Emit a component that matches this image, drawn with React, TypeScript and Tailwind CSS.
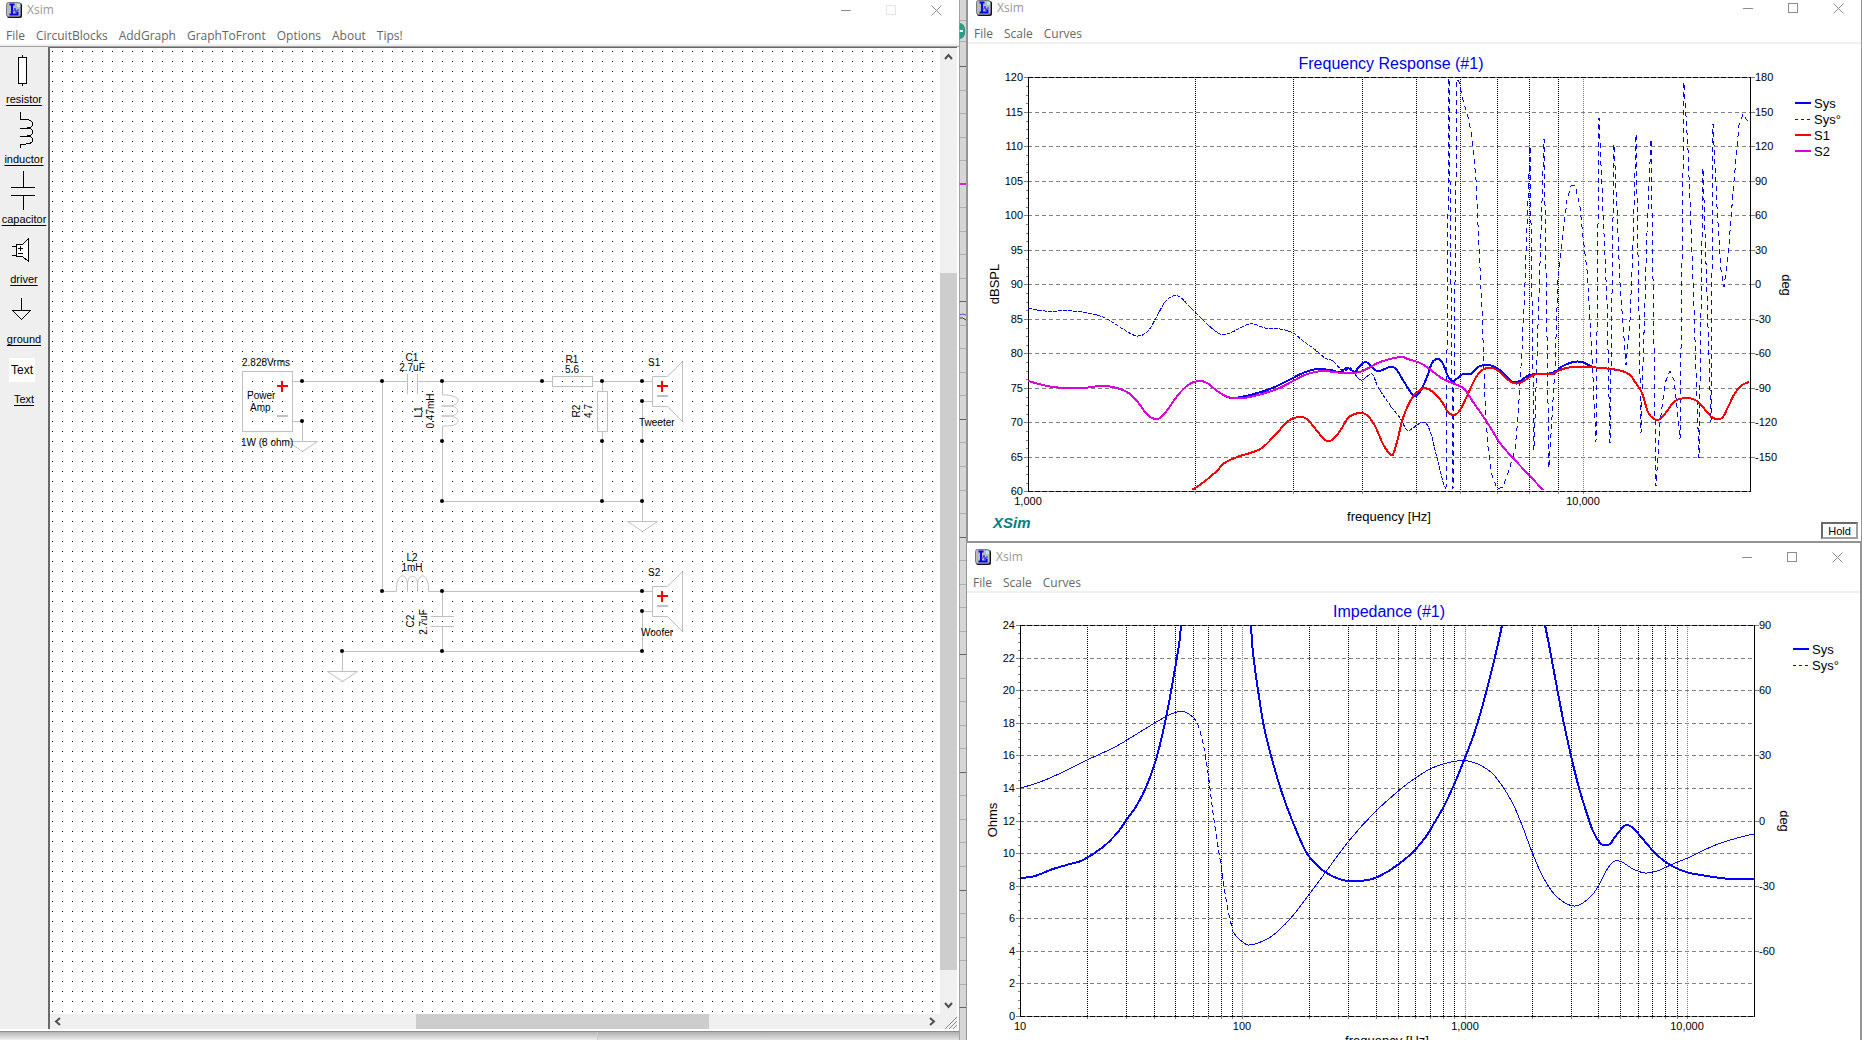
import React from "react";

type Pt = [number, number];

const pts = (s: string): Pt[] =>
  s
    .trim()
    .split(/\s+/)
    .map((p) => p.split(",").map(Number) as Pt);

/* Straight segments through every point. */
const polyline = (s: string) => "M" + pts(s).map((p) => p.join(" ")).join("L");

/* Catmull-Rom spline through every point. */
const spline = (s: string) => {
  const p = pts(s);
  let d = `M${p[0][0]} ${p[0][1]}`;
  for (let i = 0; i < p.length - 1; i++) {
    const a = p[i - 1] ?? p[i];
    const b = p[i];
    const c = p[i + 1];
    const e = p[i + 2] ?? c;
    d += `C${b[0] + (c[0] - a[0]) / 6} ${b[1] + (c[1] - a[1]) / 6} ${c[0] - (e[0] - b[0]) / 6} ${c[1] - (e[1] - b[1]) / 6} ${c[0]} ${c[1]}`;
  }
  return d;
};

/* ---------- window chrome ---------- */

function AppIcon() {
  return (
    <svg width="16" height="16" viewBox="0 0 16 16" aria-hidden="true">
      <rect x="1" y="1" width="15" height="15" rx="2" fill="#111" />
      <rect x="0.5" y="0.5" width="14" height="14" rx="2" fill="#b9b9bd" stroke="#77777c" />
      <path d="M3.5 2.5h5M6 2.5v10M3.5 12.5h8v-3" fill="none" stroke="#0000f0" strokeWidth="2" />
      <path d="M6 9h2l1-3 1 5 1-3h2" fill="none" stroke="#3c3cf0" />
      <rect x="11" y="2" width="3" height="3" fill="#a6f2ee" />
    </svg>
  );
}

function WindowButtons({ fixedSize = false }: { fixedSize?: boolean }) {
  const cls = "flex h-4 w-[45px] items-center justify-center";
  return (
    <div className="ml-auto flex text-[#8c8c8c]">
      <button type="button" aria-label="Minimize" className={cls}>
        <svg width="11" height="11"><path d="M0 5.5h10" stroke="currentColor" /></svg>
      </button>
      <button type="button" aria-label="Maximize" disabled={fixedSize} className={cls}>
        <svg width="11" height="11">
          <rect x="0.5" y="0.5" width="9" height="9" fill="none" stroke={fixedSize ? "#e4e4e4" : "currentColor"} />
        </svg>
      </button>
      <button type="button" aria-label="Close" className={cls}>
        <svg width="11" height="11"><path d="M0.5 0.5l10 10M10.5 0.5l-10 10" stroke="currentColor" /></svg>
      </button>
    </div>
  );
}

function Menu({ items }: { items: string[] }) {
  return (
    <nav className="box-content flex h-4 shrink-0 items-center gap-[11px] border-b-2 border-[#f0f0f0] pt-1 pl-[6px] text-[12px] leading-4 text-[#666]">
      {items.map((i) => (
        <button type="button" key={i}>
          {i}
        </button>
      ))}
    </nav>
  );
}

/* ---------- parts toolbar ---------- */

const tools: { name: string; icon: React.ReactNode }[] = [
  {
    name: "resistor",
    icon: (
      <>
        <rect x="18.5" y="9.5" width="8" height="26" fill="#fff" />
        <path d="M22.5 7v2M22.5 36v2" />
      </>
    ),
  },
  {
    name: "inductor",
    icon: (
      <path d="M20.5 4v7h3c12 1 12 9 3 9h-7h7c8 0 8 8 0 8h-7h7c9 0 8 8-1 8h-5v4" />
    ),
  },
  { name: "capacitor", icon: <path d="M23.5 3v16M11 19.5h24M11 27.5h24M23.5 28v14" /> },
  {
    name: "driver",
    icon: (
      <>
        <path d="M16.5 16.5h6l6-6v23l-6-5h-6z" fill="#fff" />
        <path d="M12 18.5h4M12 27.5h4M18 20.5h5M20.5 18v5M18 25.5h5" />
      </>
    ),
  },
  { name: "ground", icon: <path d="M21.5 10v12M12.5 22.5h18l-9 9z" /> },
  { name: "Text", icon: null },
];

function Toolbar() {
  return (
    <div className="flex w-12 shrink-0 flex-col bg-[#efefef] pt-px">
      {tools.map((t) => (
        <button type="button" key={t.name} className="flex h-[60px] flex-col items-center text-[11px] leading-4">
          {t.icon ? (
            <svg width="48" height="43" fill="none" stroke="#000" shapeRendering="crispEdges" aria-hidden="true">
              {t.icon}
            </svg>
          ) : (
            <span className="mt-[10px] mr-1 mb-[9px] flex h-6 w-[26px] items-center justify-center bg-white text-[12px]">
              Text
            </span>
          )}
          <span className="underline underline-offset-2">{t.name}</span>
        </button>
      ))}
    </div>
  );
}

/* ---------- schematic ---------- */

const nodes: Pt[] = [
  [302, 381], [382, 381], [442, 381], [542, 381], [602, 381], [642, 381], [642, 401], [302, 421],
  [442, 441], [602, 441], [642, 441], [442, 501], [602, 501], [642, 501],
  [382, 591], [442, 591], [642, 591], [642, 611], [342, 651], [442, 651], [642, 651],
];

const Ground = ({ x, y }: { x: number; y: number }) => <path d={`M${x - 15} ${y}h30l-15 10z`} />;

const Terminals = ({ x, y, gap }: { x: number; y: number; gap: number }) => (
  <>
    <path d={`M${x - 5} ${y}h11M${x} ${y - 5}v11`} stroke="#f00" strokeWidth="2" />
    <path d={`M${x - 5} ${y + gap}h11`} strokeWidth="2" />
  </>
);

const Driver = ({ y }: { y: number }) => (
  <>
    <path d={`M642 ${y}.5h10M642 ${y + 20}.5h10`} />
    <path d={`M667.5 ${y - 5}.5h-15v30h15l15 15v-60z`} />
    <Terminals x={662} y={y + 5} gap={10} />
  </>
);

function Schematic() {
  return (
    <svg className="block h-full w-full" role="img" aria-label="Crossover schematic">
      <defs>
        <pattern id="grid" x="2" y="3" width="10" height="10" patternUnits="userSpaceOnUse">
          <rect width="1" height="1" fill="#000" />
        </pattern>
      </defs>
      <rect width="100%" height="100%" fill="#fff" />
      <rect width="100%" height="100%" fill="url(#grid)" />
      <g transform="translate(-50 -48)">
        <g fill="none" stroke="#c0c0c0">
          <rect x="242.5" y="371.5" width="50" height="60" />
          <Terminals x={282} y={386} gap={30} />
          <path d="M293 381.5h114M293 421.5h9.5v20M382.5 381v210M407.5 374v20M417.5 374v20M418 381.5h134M593 381.5h49" />
          <Ground x={302.5} y={441.5} />
          <rect x="552.5" y="376.5" width="40" height="10" />
          <rect x="597.5" y="391.5" width="10" height="40" />
          <path d="M602.5 381v10M602.5 432v69" />
          <path d="M442.5 381v14h4c15 1 15 10 3 11h-8h8c11 0 11 10 0 10h-8h8c12 1 12 10-3 10h-4v75" />
          <path d="M442 501.5h200.5M642.5 401v120" />
          <Ground x={642.5} y={521.5} />
          <path d="M382 591.5h14.5v-4c1-15 10-15 11-3v7v-7c0-11 10-11 10 0v7v-7c1-12 10-12 11 3v4h213.5" />
          <path d="M442.5 591v25M431 616.5h23M431 626.5h23M442.5 627v24M342.5 671v-19.5h300v-40" />
          <Ground x={342.5} y={671.5} />
          <Driver y={381} />
          <Driver y={591} />
        </g>
        {nodes.map(([x, y]) => (
          <circle key={`${x}-${y}`} cx={x} cy={y} r="2" />
        ))}
        <g fontSize="10">
          <text x="242" y="366">2.828Vrms</text>
          <text x="247" y="399">Power</text>
          <text x="250" y="411">Amp</text>
          <text x="241" y="446">1W (8 ohm)</text>
          <text x="648" y="366">S1</text>
          <text x="639" y="426">Tweeter</text>
          <text x="648" y="576">S2</text>
          <text x="641" y="636">Woofer</text>
          <g textAnchor="middle">
            <text x="412" y="361">C1</text>
            <text x="412" y="371">2.7uF</text>
            <text x="572" y="363">R1</text>
            <text x="572" y="373">5.6</text>
            <text x="412" y="561">L2</text>
            <text x="412" y="571">1mH</text>
            <text transform="translate(422 412) rotate(-90)">L1</text>
            <text transform="translate(434 411) rotate(-90)">0.47mH</text>
            <text transform="translate(580 411) rotate(-90)">R2</text>
            <text transform="translate(592 411) rotate(-90)">4.7</text>
            <text transform="translate(414 621) rotate(-90)">C2</text>
            <text transform="translate(427 622) rotate(-90)">2.7uF</text>
          </g>
        </g>
      </g>
    </svg>
  );
}

/* ---------- graphs ---------- */

type Label = { at: number; text: string };

type PlotProps = {
  name: string;
  view: string;
  box: [number, number, number, number];
  title: string;
  yTitle: string;
  grid: number[];
  left: Label[];
  right: Label[];
  minor: number[];
  decades: number[];
  bottom: Label[];
  titleAt: Pt;
  yTitleAt: Pt;
  degAt: Pt;
  freqAt: Pt;
  legendAt: Pt;
  legend: { name: string; color: string; dashed?: boolean }[];
  children: React.ReactNode;
};

function Plot(p: PlotProps) {
  const [l, t, r, b] = p.box;
  return (
    <svg className="block h-full w-full" viewBox={p.view} role="img" aria-label={p.name}>
      <g fill="none" stroke="#808080">
        {p.grid.map((y) => (
          <path key={y} d={`M${l} ${y}.5H${r}`} strokeDasharray="4 3" />
        ))}
        {p.left.map((v) => (
          <path key={v.at} d={`M${l - 4} ${v.at}.5h4`} />
        ))}
        {p.right.map((v) => (
          <path key={v.at} d={`M${r + 1} ${v.at}.5h4`} />
        ))}
        {p.left.slice(1).flatMap((v, i) => {
          const a = p.left[i].at;
          return [1, 2, 3].map((k) => (
            <path key={`${a}-${k}`} d={`M${l - 2} ${Math.round(a + ((v.at - a) * k) / 4)}.5h2`} />
          ));
        })}
        {[...p.minor, ...p.decades].map((x) => (
          <path key={x} d={`M${x}.5 ${b + 1}v2`} />
        ))}
        {p.decades.map((x) => (
          <path key={x} d={`M${x}.5 ${t}V${b}`} strokeDasharray="1 1" />
        ))}
        <path d={`M${l} ${t}.5H${r}M${l} ${b}.5H${r}`} />
      </g>
      <g fill="none" stroke="#000">
        {p.minor.map((x) => (
          <path key={x} d={`M${x}.5 ${t}V${b}`} strokeDasharray="1 1" />
        ))}
        <path d={`M${l} ${t}.5H${r}M${l} ${b}.5H${r}`} strokeDasharray="5 2" />
        <path d={`M${l}.5 ${t}V${b}M${r}.5 ${t}V${b + 1}`} />
      </g>
      <g fill="none" strokeLinejoin="round" shapeRendering="crispEdges">
        {p.children}
      </g>
      <g fontSize="11">
        {p.left.map((v) => (
          <text key={v.at} x={l - 5} y={v.at + 4} textAnchor="end">{v.text}</text>
        ))}
        {p.right.map((v) => (
          <text key={v.at} x={r + 5} y={v.at + 4}>{v.text}</text>
        ))}
        {p.bottom.map((v) => (
          <text key={v.at} x={v.at} y={b + 14} textAnchor="middle">{v.text}</text>
        ))}
      </g>
      <g fontSize="13">
        <g textAnchor="middle">
          <text x={p.titleAt[0]} y={p.titleAt[1]} fontSize="16" fill="#0000e6">{p.title}</text>
          <text x={p.freqAt[0]} y={p.freqAt[1]}>frequency [Hz]</text>
          <text transform={`translate(${p.yTitleAt.join(" ")}) rotate(-90)`}>{p.yTitle}</text>
          <text transform={`translate(${p.degAt.join(" ")}) rotate(90)`}>deg</text>
        </g>
        {p.legend.map((s, i) => {
          const x = p.legendAt[0];
          const y = p.legendAt[1] + i * 16;
          return (
            <g key={s.name}>
              <path
                d={s.dashed ? `M${x} ${y}.5h15` : `M${x} ${y}h16`}
                stroke={s.color}
                strokeWidth={s.dashed ? 1 : 2}
                strokeDasharray={s.dashed ? "3 3" : undefined}
              />
              <text x={x + 19} y={y + 5}>{s.name}</text>
            </g>
          );
        })}
      </g>
    </svg>
  );
}

const steps = (from: number, to: number, labels: string[]): Label[] =>
  labels.map((text, i) => ({ text, at: Math.round(from + ((to - from) * i) / (labels.length - 1)) }));

const BLUE = "#0000ff";
const RED = "#ff0000";
const MAGENTA = "#dc00dc";

const responseTail =
  "1603,368 1622,371 1630,375 1635,382 1642,393 1648,412 1654,419 1660,419 1667,411 1675,401 1687,398 1697,401 1707,412 1713,418 1722,418 1728,407 1735,393 1742,385 1749,382";
const wooferLow =
  "1028,381 1047,386 1063,388 1083,388 1100,386 1113,387 1127,392 1137,401 1145,412 1152,418 1160,418 1168,409 1178,395 1188,385 1198,381 1207,383 1220,393 1232,398";
const responseS2 =
  wooferLow +
  " 1250,397 1277,389 1293,381 1307,374 1323,371 1343,373 1360,372 1380,362 1400,357 1408,359 1420,363 1427,367 1443,379 1463,388 1473,402 1487,422 1500,443 1513,458 1530,476 1543,490";
const responseSys =
  wooferLow +
  " 1250,395 1270,389 1287,381 1303,373 1317,369 1330,370 1340,372 1347,368 1355,372 1358,368 1366,362 1377,371 1390,367 1396,369 1403,380 1413,395 1420,392 1427,377 1432,363 1437,359 1442,362 1448,376 1453,381 1463,374 1471,374 1478,367 1488,365 1497,368 1507,377 1513,382 1520,381 1530,375 1552,373 1563,366 1573,362 1582,362 1593,367 " +
  responseTail;
const responseS1 =
  "1192,489 1197,487 1217,471 1223,464 1237,457 1250,453 1262,448 1277,433 1288,421 1298,417 1307,419 1317,431 1325,440 1332,440 1340,431 1348,418 1355,414 1360,413 1367,415 1375,426 1383,444 1391,455 1394,452 1398,438 1403,418 1412,398 1420,390 1425,388 1433,392 1442,402 1448,412 1454,415 1460,410 1467,396 1475,379 1482,370 1490,368 1497,370 1507,379 1513,383 1520,383 1530,377 1537,374 1552,374 1560,370 1573,367 " +
  responseTail;
const phaseLow =
  "1028,308 1045,311 1073,311 1093,314 1107,319 1123,329 1137,336 1148,331 1157,316 1165,302 1173,296 1180,297 1190,307 1207,324 1220,334 1230,333 1250,324 1265,328 1280,329 1293,333 1303,341 1313,348 1325,358 1333,361 1343,371 1351,368 1357,377 1362,380 1372,374 1378,387 1390,405 1400,418 1406,429 1410,430 1423,422 1430,431 1437,458 1443,482 1446,489";
const phaseHigh =
  "1446,489 1449,78 1453,489 1457,79 1459,82 1463,100 1468,117 1472,137 1476,180 1479,247 1482,310 1485,400 1488,447 1491,472 1497,489 1503,487 1509,470 1515,450 1518,417 1522,350 1525,283 1528,200 1530,146 1534,450 1544,139 1549,468 1555,367 1558,280 1562,243 1567,200 1571,186 1575,185 1580,207 1583,237 1587,270 1592,357 1596,442 1599,118 1607,303 1610,443 1614,144 1617,210 1620,283 1626,365 1630,320 1633,243 1636,134 1641,433 1647,233 1651,139 1656,486 1660,423 1665,383 1670,371 1674,380 1677,407 1680,439 1684,82 1688,150 1693,280 1699,458 1703,168 1711,422 1713,124 1717,207 1721,270 1724,287 1728,257 1733,193 1737,147 1739,125 1743,114 1746,119 1749,122";

function ResponsePlot() {
  const left = steps(77, 491, ["120", "115", "110", "105", "100", "95", "90", "85", "80", "75", "70", "65", "60"]);
  const right = steps(77, 457, ["180", "150", "120", "90", "60", "30", "0", "-30", "-60", "-90", "-120", "-150"]);
  return (
    <Plot
      name="Frequency response graph"
      view="968 44 893 497"
      box={[1028, 77, 1750, 491]}
      title="Frequency Response (#1)"
      yTitle="dBSPL"
      grid={left.slice(1, -1).map((v) => v.at)}
      left={left}
      right={right}
      minor={[1195, 1293, 1362, 1416, 1460, 1497, 1529, 1558]}
      decades={[1583]}
      bottom={[{ at: 1028, text: "1,000" }, { at: 1583, text: "10,000" }]}
      titleAt={[1391, 69]}
      yTitleAt={[999, 284]}
      degAt={[1782, 285]}
      freqAt={[1389, 521]}
      legendAt={[1795, 103]}
      legend={[
        { name: "Sys", color: BLUE },
        { name: "Sys°", color: BLUE, dashed: true },
        { name: "S1", color: RED },
        { name: "S2", color: MAGENTA },
      ]}
    >
      <path d={spline(phaseLow)} stroke={BLUE} strokeDasharray="4 1" />
      <path d={polyline(phaseHigh)} stroke={BLUE} strokeDasharray="5 4" />
      <path d={spline(responseSys)} stroke={BLUE} strokeWidth="2" />
      <path d={spline(responseS1)} stroke={RED} strokeWidth="2" />
      <path d={spline(responseS2)} stroke={MAGENTA} strokeWidth="2" />
      <text x="993" y="528" fontSize="15" fontWeight="bold" fontStyle="italic" fill="#008080">
        XSim
      </text>
    </Plot>
  );
}

const impedance = [
  "1021,878 1035,876 1053,869 1070,864 1083,860 1103,847 1118,832 1127,819 1137,805 1147,785 1157,756 1166,718 1173,680 1179,645 1181,625",
  "1251,625 1253,653 1258,690 1264,727 1273,763 1282,793 1292,820 1305,850 1313,861 1325,872 1342,880 1357,881 1372,879 1387,872 1400,863 1412,853 1425,838 1433,825 1443,808 1453,787 1463,763 1474,734 1483,704 1493,665 1500,635 1502,625",
  "1545,625 1550,650 1557,688 1564,724 1572,760 1579,788 1587,814 1593,831 1600,843 1604,845 1610,844 1615,837 1623,827 1627,825 1633,828 1642,838 1655,853 1667,863 1678,869 1690,873 1707,876 1730,879 1754,879",
];
const impedancePhase = {
  rise: "1021,788 1037,783 1050,778 1067,770 1087,760 1113,748 1127,740 1153,724 1167,716 1177,712 1185,712 1193,717",
  drop: "1193,717 1198,725 1203,743 1208,773 1214,820 1222,872 1227,905 1233,932",
  rest: "1233,932 1238,938 1243,942 1248,945 1258,943 1272,936 1290,919 1308,896 1325,873 1348,842 1375,812 1402,788 1417,777 1430,769 1443,764 1457,761 1468,761 1480,765 1492,773 1503,787 1513,804 1522,825 1532,852 1543,877 1555,895 1567,904 1575,906 1583,903 1593,894 1600,883 1608,868 1615,861 1622,862 1633,869 1645,873 1657,871 1673,864 1690,857 1713,846 1737,838 1754,834",
};

function ImpedancePlot() {
  const left = steps(625, 1016, ["24", "22", "20", "18", "16", "14", "12", "10", "8", "6", "4", "2", "0"]);
  const right = steps(625, 951, ["90", "60", "30", "0", "-30", "-60"]);
  const minor: number[] = [];
  for (let d = 0; d < 4; d++)
    for (let k = 2; k < 10; k++) {
      const x = Math.round(1020 + 222.3 * (d + Math.log10(k)));
      if (x < 1750) minor.push(x);
    }
  return (
    <Plot
      name="Impedance graph"
      view="966 593 894 447"
      box={[1020, 625, 1754, 1016]}
      title="Impedance (#1)"
      yTitle="Ohms"
      grid={left.slice(1, -1).map((v) => v.at)}
      left={left}
      right={right}
      minor={minor}
      decades={[1242, 1465, 1687]}
      bottom={[
        { at: 1020, text: "10" },
        { at: 1242, text: "100" },
        { at: 1465, text: "1,000" },
        { at: 1687, text: "10,000" },
      ]}
      titleAt={[1389, 617]}
      yTitleAt={[997, 820]}
      degAt={[1780, 821]}
      freqAt={[1387, 1045]}
      legendAt={[1793, 649]}
      legend={[
        { name: "Sys", color: BLUE },
        { name: "Sys°", color: BLUE, dashed: true },
      ]}
    >
      <path d={spline(impedancePhase.rise)} stroke={BLUE} />
      <path d={spline(impedancePhase.drop)} stroke={BLUE} strokeDasharray="5 3" />
      <path d={spline(impedancePhase.rest)} stroke={BLUE} />
      {impedance.map((s) => (
        <path key={s} d={spline(s)} stroke={BLUE} strokeWidth="2" />
      ))}
    </Plot>
  );
}

/* ---------- desktop ---------- */

/* Sliver of the program behind the windows. */
function Backdrop() {
  const rows = Array.from({ length: 41 }, (_, i) => i);
  return (
    <svg className="h-full w-full" preserveAspectRatio="none" viewBox="0 0 9 1040" aria-hidden="true">
      <rect width="9" height="1040" fill="#d6d6d6" />
      <path d="M0 20.5h9M0 41.5h9" stroke="#a8a8a8" />
      <rect x="-8" y="23" width="16" height="16" rx="7" fill="#2a9d84" />
      <path d="M0 31h5" stroke="#fff" strokeWidth="2" />
      {rows.map((i) => (
        <path key={i} d={`M0 ${Math.round(66 + i * 23.53)}.5h9`} stroke={i % 5 === 0 ? "#555" : "#a8a8a8"} />
      ))}
      <path d="M0 184h9" stroke="#d22ad2" strokeWidth="2" />
      <path d="M0 315q5-2 9 0" stroke="#3a3ad8" fill="none" />
      <path d="M0 318q5-1 9 2" stroke="#222" fill="none" />
      <path d="M0.5 0V1040" stroke="#949494" />
    </svg>
  );
}

const Chevron = ({ d }: { d: string }) => (
  <svg width="9" height="9" fill="none" stroke="#505050" strokeWidth="2" aria-hidden="true">
    <path d={d} />
  </svg>
);

export default function App() {
  return (
    <div className="grid h-screen grid-cols-[minmax(0,959fr)_7px_minmax(0,896fr)] overflow-hidden bg-[#d6d6d6] font-['Liberation_Sans',Arial,sans-serif] text-black">
      <section className="flex min-h-0 flex-col">
        <div className="flex min-h-0 flex-1 flex-col bg-white font-['Open_Sans',sans-serif]">
          <header className="flex h-6 shrink-0 items-center pb-1 pl-[6px] text-[12px] leading-4 text-[#999]">
            <AppIcon />
            <h1 className="ml-[5px]">Xsim</h1>
            <WindowButtons fixedSize />
          </header>
          <Menu items={["File", "CircuitBlocks", "AddGraph", "GraphToFront", "Options", "About", "Tips!"]} />
          <div className="flex min-h-0 flex-1 border-t border-[#a0a0a0] pr-[2px] font-['Liberation_Sans',Arial,sans-serif]">
            <Toolbar />
            <div className="flex min-h-0 min-w-0 flex-1 flex-col border-t border-l-2 border-[#696969]">
              <div className="flex min-h-0 flex-1">
                <div className="min-w-0 flex-1">
                  <Schematic />
                </div>
                <div className="flex w-[17px] flex-col bg-[#f0f0f0]">
                  <button type="button" aria-label="Scroll up" className="flex h-[17px] items-center justify-center">
                    <Chevron d="M1 7l3.5-4L8 7" />
                  </button>
                  <div className="flex-[208]" />
                  <div className="flex-[697] bg-[#cdcdcd]" />
                  <div className="flex-[27]" />
                  <button type="button" aria-label="Scroll down" className="flex h-[17px] items-center justify-center">
                    <Chevron d="M1 2l3.5 4L8 2" />
                  </button>
                </div>
              </div>
              <div className="flex h-[15px] bg-[#f0f0f0]">
                <button type="button" aria-label="Scroll left" className="flex w-[17px] items-center justify-center">
                  <Chevron d="M6 1L2 4.5 6 8" />
                </button>
                <div className="flex-[349]" />
                <div className="flex-[293] bg-[#cdcdcd]" />
                <div className="flex-[214]" />
                <button type="button" aria-label="Scroll right" className="flex w-[17px] items-center justify-center">
                  <Chevron d="M3 1l4 3.5L3 8" />
                </button>
                <svg width="17" height="15" stroke="#8a8a8a" aria-hidden="true">
                  <path d="M5 15L17 3M9 15l8-8M13 15l4-4" />
                </svg>
              </div>
            </div>
          </div>
          <div className="h-[2px] shrink-0 bg-white" />
        </div>
        <div className="flex h-[9px] shrink-0 border-t border-[#8f8f8f]">
          <div className="flex-[598] bg-linear-to-b from-[#b4b4b4] to-[#f0f0f0]" />
          <div className="flex-[361] border-l border-[#ccc] bg-linear-to-b from-[#b0b0b0] to-[#e4e4e4]" />
        </div>
      </section>

      <Backdrop />

      <section className="grid min-h-0 grid-rows-[minmax(0,543fr)_minmax(0,497fr)] bg-[#949494] font-['Open_Sans',sans-serif]">
        <div className="flex min-h-0 flex-col border-r border-b-2 border-l-2 border-[#949494] bg-white">
          <header className="flex h-[22px] shrink-0 items-center pb-[6px] pl-2 text-[12px] leading-4 text-[#999]">
            <AppIcon />
            <h2 className="ml-[5px]">Xsim</h2>
            <WindowButtons />
          </header>
          <Menu items={["File", "Scale", "Curves"]} />
          <div className="relative min-h-0 flex-1 font-['Liberation_Sans',Arial,sans-serif]">
            <ResponsePlot />
            <button
              type="button"
              className="absolute right-[3px] bottom-[2px] h-[17px] w-[37px] border-2 border-t-[#696969] border-r-[#a0a0a0] border-b-[#a0a0a0] border-l-[#696969] bg-white text-[11px] leading-3"
            >
              Hold
            </button>
          </div>
        </div>
        <div className="mr-[2px] flex min-h-0 flex-col border-l border-[#949494] bg-white">
          <header className="flex h-7 shrink-0 items-center pl-2 text-[12px] leading-4 text-[#999]">
            <AppIcon />
            <h2 className="ml-[5px]">Xsim</h2>
            <WindowButtons />
          </header>
          <Menu items={["File", "Scale", "Curves"]} />
          <div className="-ml-px min-h-0 flex-1 font-['Liberation_Sans',Arial,sans-serif]">
            <ImpedancePlot />
          </div>
        </div>
      </section>
    </div>
  );
}
